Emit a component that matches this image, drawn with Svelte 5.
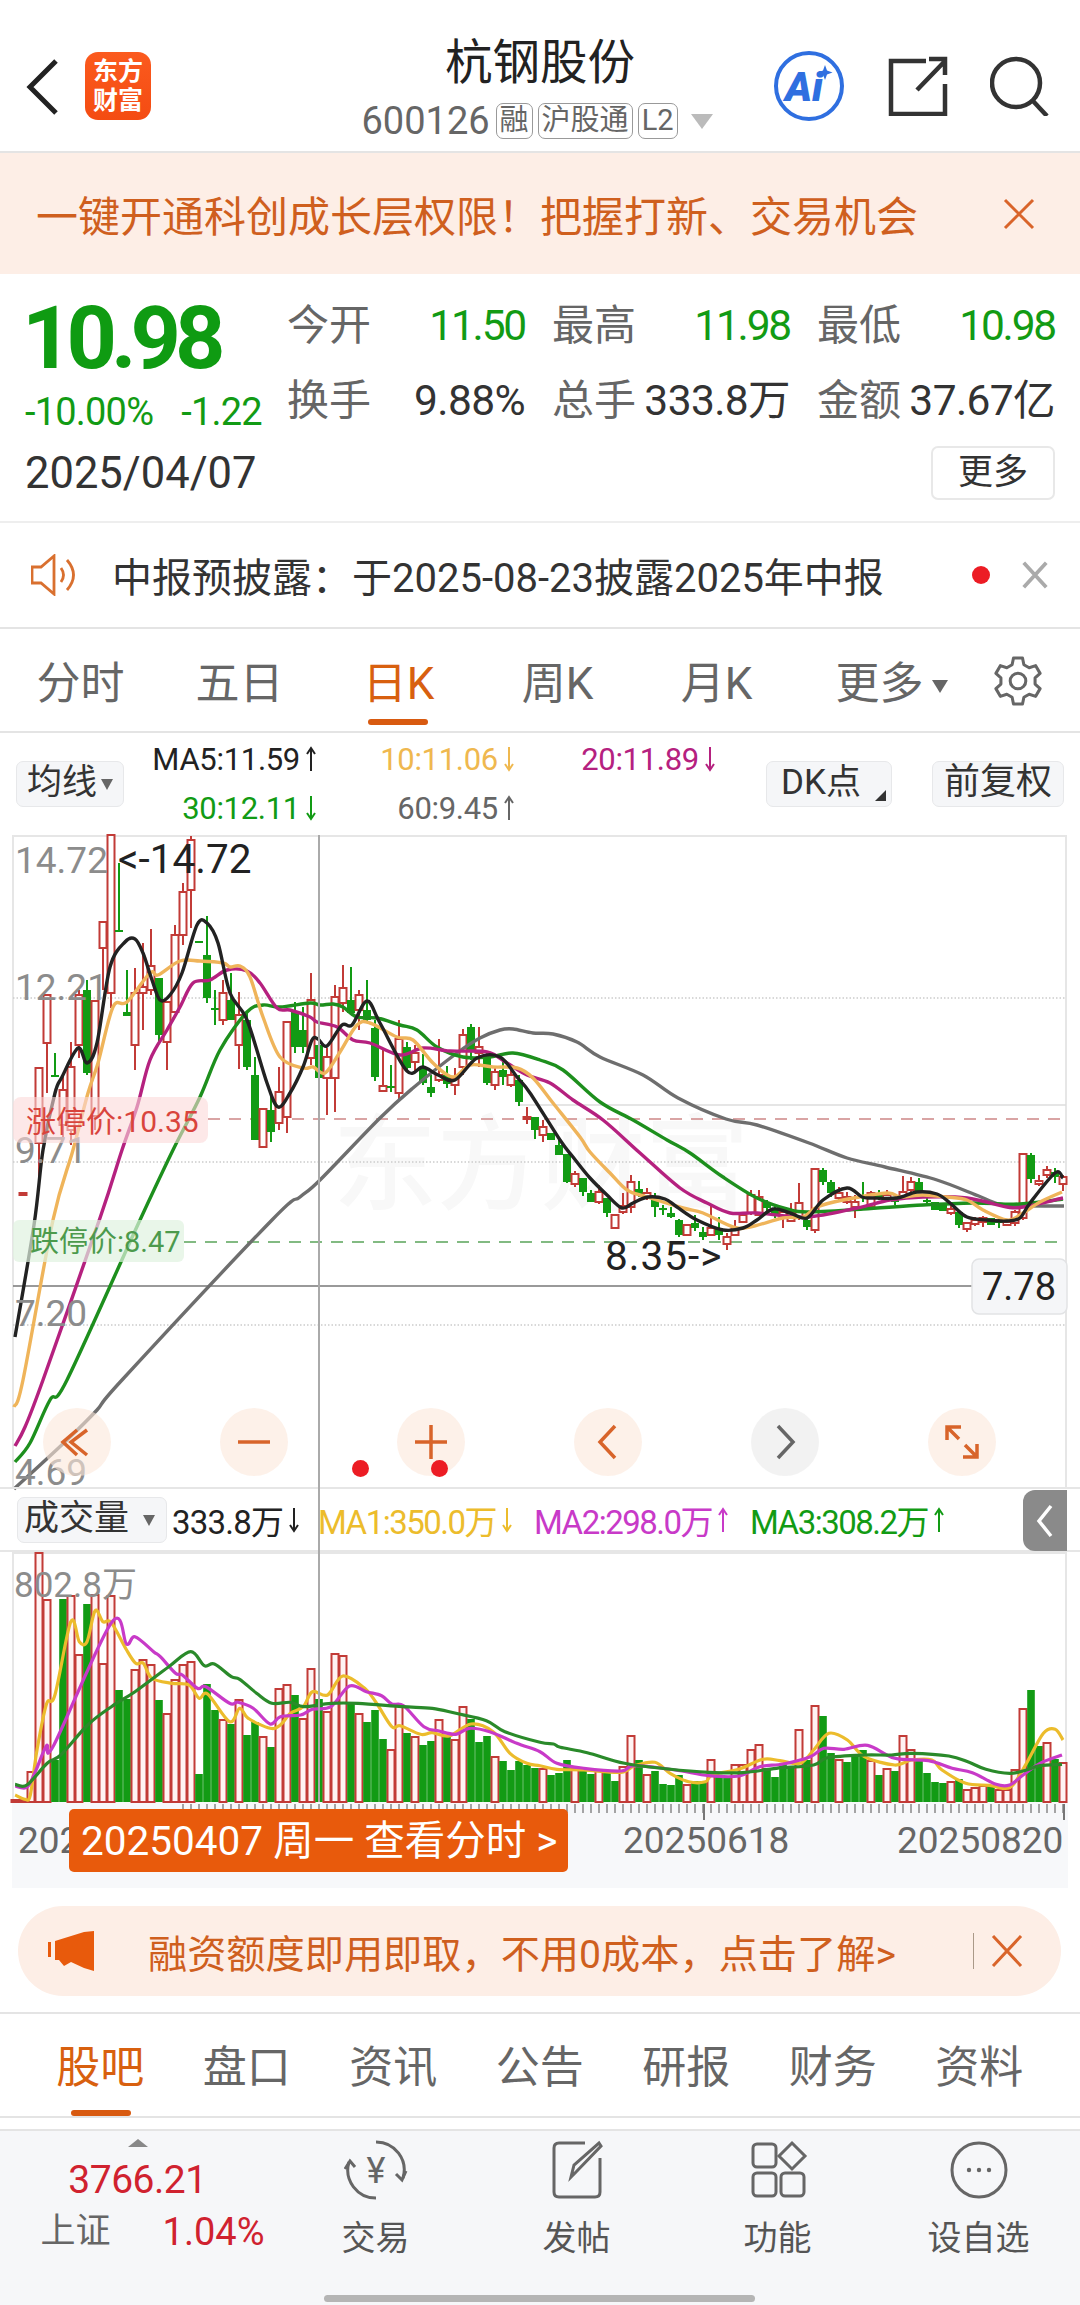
<script>
	// candles in page pixels: [index, r|g, high, bodyTop, bodyBottom, low]
	const candles = [
		[1,'r',1193,1193,1195,1195],[3,'r',1068,1068,1143,1190],[4,'r',995,995,1043,1093],[5,'g',1053,1075,1077,1077],
		[6,'r',1075,1090,1125,1140],[7,'r',1042,1067,1130,1145],[8,'r',990,995,1045,1058],[9,'g',980,990,1073,1075],
		[10,'r',1001,1001,1116,1130],[11,'r',922,922,948,990],[12,'r',835,835,993,1008],[13,'g',863,930,932,932],
		[14,'g',970,1012,1016,1016],[15,'r',968,993,1045,1070],[16,'r',943,987,993,1030],[17,'r',929,966,990,995],
		[18,'g',978,978,1035,1043],[19,'r',1002,1002,1042,1070],[20,'r',925,935,1012,1013],[21,'r',883,892,935,945],
		[22,'r',836,840,890,928],[23,'g',941,941,943,943],[24,'g',916,955,998,1003],[25,'g',990,1008,1010,1025],
		[26,'r',980,993,1020,1025],[27,'g',973,1000,1020,1020],[28,'r',992,1015,1045,1069],[29,'g',1012,1020,1067,1070],
		[30,'g',1057,1075,1140,1140],[31,'r',1109,1109,1147,1147],[32,'g',1093,1110,1132,1142],[33,'r',1067,1092,1123,1130],
		[34,'r',1022,1022,1117,1133],[35,'g',1002,1012,1047,1053],[36,'g',1007,1030,1047,1053],[37,'r',973,1000,1058,1065],
		[38,'g',1013,1045,1078,1085],[39,'r',1048,1057,1078,1115],[40,'r',985,997,1078,1112],[41,'r',965,988,1003,1012],
		[42,'g',967,1000,1013,1015],[43,'r',990,995,1010,1030],[44,'g',980,1010,1020,1022],[45,'g',1020,1028,1077,1081],
		[46,'r',1048,1086,1091,1091],[47,'g',1065,1086,1088,1092],[48,'r',1020,1039,1093,1099],[49,'g',1042,1047,1068,1071],
		[50,'r',1045,1053,1062,1073],[51,'g',1054,1067,1083,1085],[52,'g',1075,1087,1093,1097],[53,'r',1039,1075,1080,1082],
		[54,'g',1066,1075,1084,1088],[55,'r',1068,1079,1085,1095],[56,'r',1029,1035,1067,1075],[57,'g',1024,1027,1050,1060],
		[58,'r',1027,1047,1053,1067],[59,'g',1052,1056,1083,1085],[60,'r',1067,1072,1085,1090],[61,'g',1060,1070,1077,1085],
		[62,'r',1068,1075,1085,1087],[63,'g',1075,1080,1102,1106],[64,'r',1107,1117,1119,1124],[65,'g',1117,1117,1130,1139],
		[66,'r',1120,1127,1135,1142],[67,'g',1133,1133,1140,1140],[68,'g',1137,1145,1155,1155],[69,'g',1154,1154,1182,1183],
		[70,'r',1171,1174,1184,1187],[71,'g',1178,1178,1192,1196],[72,'g',1190,1193,1202,1202],[73,'r',1185,1192,1202,1204],
		[74,'g',1198,1198,1213,1217],[75,'r',1215,1215,1228,1228],[76,'r',1193,1206,1212,1214],[77,'r',1175,1182,1207,1213],
		[78,'g',1181,1189,1195,1197],[79,'r',1188,1193,1197,1200],[80,'g',1193,1198,1207,1217],[81,'g',1205,1208,1210,1215],
		[82,'g',1207,1213,1217,1218],[83,'g',1219,1220,1235,1237],[84,'r',1225,1225,1235,1235],[85,'g',1215,1223,1228,1231],
		[86,'g',1227,1232,1237,1240],[87,'r',1205,1228,1235,1235],[88,'g',1217,1228,1235,1240],[89,'r',1233,1237,1244,1250],
		[90,'r',1220,1229,1235,1236],[91,'r',1213,1215,1222,1223],[92,'r',1190,1195,1213,1215],[93,'r',1190,1197,1215,1215],
		[94,'g',1200,1202,1208,1212],[95,'g',1207,1210,1215,1218],[96,'r',1210,1212,1218,1228],[97,'r',1203,1213,1221,1222],
		[98,'r',1183,1203,1218,1220],[99,'g',1215,1220,1227,1230],[100,'r',1169,1169,1230,1233],[101,'g',1168,1170,1182,1185],
		[102,'g',1180,1182,1193,1197],[103,'r',1187,1193,1198,1200],[104,'r',1192,1197,1202,1204],[105,'r',1195,1202,1207,1218],
		[106,'g',1182,1195,1197,1202],[107,'r',1191,1193,1207,1207],[108,'g',1190,1193,1197,1200],[109,'r',1190,1195,1198,1200],
		[110,'g',1198,1200,1201,1205],[111,'r',1176,1192,1198,1200],[112,'r',1177,1182,1190,1192],[113,'g',1178,1182,1192,1192],
		[114,'g',1198,1200,1202,1203],[115,'g',1202,1202,1210,1210],[116,'g',1203,1205,1211,1211],[117,'r',1205,1209,1213,1215],
		[118,'g',1212,1212,1225,1228],[119,'r',1223,1223,1229,1232],[120,'r',1217,1220,1224,1226],[121,'r',1216,1218,1222,1227],
		[122,'g',1218,1218,1225,1225],[123,'g',1218,1221,1223,1228],[124,'r',1220,1222,1225,1226],[125,'r',1210,1212,1223,1226],
		[126,'r',1154,1154,1218,1220],[127,'g',1153,1155,1179,1183],[128,'r',1175,1181,1184,1186],[129,'r',1166,1170,1175,1178],
		[130,'g',1168,1172,1177,1183],[131,'r',1175,1177,1184,1191]
	];

	const ma5 = [[15,1337],[34,1225],[43,1150],[55,1093],[62,1077],[78,1048],[87,1063],[97,1043],[110,967],[125,942],[135,939],[143,953],[152,980],[160,1000],[170,995],[182,973],[197,925],[207,923],[218,943],[230,993],[247,1020],[267,1083],[278,1107],[290,1093],[303,1067],[312,1040],[318,1039],[327,1046],[342,1025],[352,1025],[367,1001],[380,1023],[407,1071],[423,1067],[438,1075],[455,1080],[477,1058],[500,1057],[517,1077],[530,1093],[560,1140],[573,1157],[590,1178],[607,1195],[622,1208],[633,1203],[648,1197],[665,1199],[677,1207],[697,1220],[723,1230],[743,1228],[757,1220],[773,1209],[790,1213],[807,1218],[823,1200],[847,1188],[862,1197],[873,1198],[897,1198],[917,1192],[937,1194],[950,1203],[967,1217],[987,1220],[1007,1221],[1020,1218],[1030,1203],[1055,1173],[1063,1178]];
	const ma10 = [[14,1407],[23,1380],[53,1220],[73,1150],[88,1093],[98,1063],[113,1007],[127,1002],[150,973],[158,975],[180,961],[200,961],[223,963],[230,967],[240,966],[250,977],[263,1017],[280,1057],[303,1068],[313,1067],[325,1073],[340,1052],[357,1025],[370,1023],[397,1037],[413,1040],[433,1063],[453,1077],[470,1065],[493,1067],[517,1068],[533,1078],[553,1103],[580,1137],[590,1152],[610,1173],[627,1190],[647,1197],[683,1208],[703,1213],[733,1227],[750,1227],[783,1218],[803,1217],[817,1207],[843,1200],[887,1193],[900,1197],[923,1195],[947,1197],[967,1200],[983,1210],[1007,1220],[1020,1215],[1040,1202],[1062,1192]];
	const ma20 = [[15,1446],[25,1427],[43,1380],[100,1218],[122,1150],[137,1107],[150,1060],[167,1030],[180,1007],[193,983],[210,980],[227,970],[247,971],[260,983],[277,1008],[290,1010],[310,1017],[317,1022],[337,1027],[353,1040],[370,1043],[400,1055],[423,1048],[450,1051],[487,1052],[507,1063],[527,1075],[550,1083],[573,1100],[603,1120],[640,1153],[680,1188],[707,1203],[730,1213],[757,1213],[807,1217],[857,1208],[890,1200],[923,1197],[967,1198],[1007,1207],[1023,1207],[1063,1198]];
	const ma30 = [[15,1462],[30,1443],[50,1400],[67,1380],[140,1220],[173,1150],[200,1097],[220,1050],[247,1012],[263,1005],[280,1007],[310,1003],[320,1005],[333,1004],[343,1007],[357,1017],[377,1018],[400,1025],[417,1030],[437,1047],[463,1057],[490,1057],[513,1053],[540,1060],[563,1070],[600,1102],[633,1120],[667,1140],[690,1153],[723,1177],[757,1198],[787,1209],[807,1212],[863,1209],[923,1205],[973,1203],[1020,1204],[1063,1199]];
	const ma60 = [[14,1489],[67,1440],[97,1410],[122,1380],[272,1220],[300,1197],[320,1180],[380,1118],[413,1088],[457,1053],[480,1038],[500,1030],[513,1029],[533,1033],[553,1034],[577,1042],[600,1057],[643,1075],[678,1098],[726,1119],[757,1125],[809,1143],[847,1158],[885,1167],[937,1180],[981,1197],[1005,1205],[1064,1206]];

	// volume bars: heights in px above the 1802 baseline
	const volume = [
		[2,'r'],[2,'r'],[30,'r'],[249,'r'],[202,'r'],[42,'g'],[203,'g'],[206,'r'],[147,'r'],[198,'g'],[207,'r'],[138,'r'],[206,'r'],[112,'g'],[103,'g'],[132,'r'],[142,'r'],[137,'r'],[102,'g'],[88,'r'],
		[122,'r'],[137,'r'],[140,'r'],[28,'g'],[118,'g'],[92,'g'],[82,'r'],[78,'g'],[102,'r'],[67,'g'],[80,'g'],[65,'r'],[55,'g'],[113,'r'],[117,'r'],[107,'g'],[83,'r'],[133,'r'],[103,'g'],[90,'r'],
		[148,'r'],[146,'r'],[99,'g'],[88,'r'],[80,'g'],[92,'g'],[63,'g'],[52,'r'],[97,'r'],[69,'g'],[65,'r'],[57,'g'],[61,'g'],[82,'r'],[65,'g'],[62,'r'],[95,'r'],[83,'g'],[60,'g'],[66,'g'],
		[45,'r'],[41,'g'],[32,'g'],[41,'g'],[37,'g'],[34,'g'],[33,'r'],[27,'g'],[29,'g'],[42,'g'],[33,'r'],[31,'g'],[28,'g'],[31,'r'],[30,'g'],[21,'g'],[35,'r'],[66,'r'],[42,'g'],[27,'r'],
		[31,'g'],[18,'g'],[17,'g'],[27,'g'],[17,'r'],[21,'g'],[21,'g'],[42,'r'],[27,'g'],[25,'g'],[37,'r'],[37,'r'],[52,'r'],[57,'r'],[34,'g'],[25,'g'],[39,'g'],[34,'g'],[72,'r'],[42,'g'],
		[96,'r'],[86,'g'],[49,'g'],[42,'r'],[40,'g'],[47,'g'],[52,'g'],[41,'r'],[27,'g'],[33,'r'],[31,'g'],[66,'r'],[52,'r'],[42,'g'],[29,'g'],[20,'g'],[19,'g'],[20,'r'],[23,'g'],[12,'r'],
		[14,'r'],[16,'r'],[16,'g'],[12,'r'],[12,'r'],[32,'r'],[93,'r'],[112,'g'],[56,'g'],[59,'r'],[43,'g'],[39,'r']
	];

	// the volume averages were read off two crops, hence the two scales
	const left = (p) => p.map(([x, y]) => [10 + x / 2.96, 1550 + y / 3]);
	const right = (p) => p.map(([x, y]) => [540 + x / 2.96, 1600 + y / 3]);
	const ma1 = [...left([[15,735],[45,748],[60,735],[80,600],[108,462],[133,435],[180,215],[205,275],[228,275],[252,182],[275,215],[300,218],[345,300],[372,340],[395,340],[420,385],[480,400],[530,405],[560,445],[585,432],[650,515],[680,475],[705,505],[770,535],[800,525],[830,490],[868,470],[895,425],[940,435],[985,378],[1050,415],[1085,460],[1130,530],[1155,527],[1215,553],[1250,548],[1300,558],[1365,522],[1430,545],[1480,610],[1530,640]]), ...right([[0,497],[50,508],[130,510],[240,517],[280,497],[340,487],[385,520],[440,545],[490,545],[510,525],[590,507],[660,478],[710,482],[770,490],[810,450],[855,400],[910,420],[960,470],[1050,495],[1100,480],[1160,480],[1190,510],[1260,550],[1330,556],[1370,565],[1400,555],[1440,490],[1490,400],[1525,388],[1548,420]])];
	const ma2 = [...left([[15,708],[50,712],[75,665],[108,587],[130,585],[300,218],[345,282],[370,260],[425,305],[445,320],[490,370],[510,375],[555,415],[580,410],[650,460],[675,457],[720,475],[770,522],[800,500],[860,495],[895,478],[950,470],[1005,408],[1055,425],[1100,437],[1130,462],[1165,467],[1225,530],[1270,543],[1320,553],[1360,535],[1420,545],[1500,580]]), ...right([[0,455],[50,490],[130,505],[240,513],[280,497],[400,510],[500,527],[590,528],[650,500],[720,492],[800,470],[840,445],[900,448],[970,436],[1050,475],[1150,482],[1220,505],[1280,518],[1350,553],[1390,555],[1430,525],[1480,490],[1545,465]])];
	const ma3 = [...left([[15,703],[50,705],[110,640],[150,615],[230,525],[300,470],[370,425],[470,350],[535,305],[575,347],[605,342],[655,380],[680,388],[730,430],[775,460],[830,457],[870,470],[950,460],[1030,460],[1160,470],[1250,475],[1320,490],[1410,512],[1465,545]]), ...right([[0,427],[40,432],[60,442],[140,458],[250,490],[380,507],[500,517],[600,518],[700,505],[810,495],[850,473],[960,465],[1040,465],[1100,460],[1210,468],[1270,487],[1320,508],[1390,520],[1440,510],[1480,497],[1545,493]])];

	function smooth(p) {
		let d = `M${p[0][0].toFixed(1)} ${p[0][1].toFixed(1)}`;
		for (let i = 0; i < p.length - 1; i++) {
			const a = p[i - 1] ?? p[i], b = p[i], c = p[i + 1], e = p[i + 2] ?? c;
			const c1 = [b[0] + (c[0] - a[0]) / 6, b[1] + (c[1] - a[1]) / 6];
			const c2 = [c[0] - (e[0] - b[0]) / 6, c[1] - (e[1] - b[1]) / 6];
			d += `C${c1[0].toFixed(1)} ${c1[1].toFixed(1)} ${c2[0].toFixed(1)} ${c2[1].toFixed(1)} ${c[0].toFixed(1)} ${c[1].toFixed(1)}`;
		}
		return d;
	}

	function gear(cx, cy, R, r, n) {
		const pt = (rad, deg) => {
			const a = (deg * Math.PI) / 180;
			return `${(cx + rad * Math.cos(a)).toFixed(1)} ${(cy + rad * Math.sin(a)).toFixed(1)}`;
		};
		const pts = [];
		for (let k = 0; k < n; k++) {
			const a = (k * 360) / n - 90;
			pts.push(pt(R, a - 11), pt(R, a + 11), pt(r, a + 20), pt(r, a + 40));
		}
		return 'M' + pts.join('L') + 'Z';
	}

	const barX = (i) => 15 + 8 * i;
	const ticks = Array.from({ length: 112 }, (_, k) => barX(21) + k * 8).filter((x) => x < 1066);

	const stats = [
		['今开', '11.50', 'down'], ['最高', '11.98', 'down'], ['最低', '10.98', 'down'],
		['换手', '9.88%', ''], ['总手', '333.8万', ''], ['金额', '37.67亿', '']
	];
	const periods = ['分时', '五日', '日K', '周K', '月K'];
	const maLegend = [
		{ text: 'MA5:11.59', color: '#222', up: true },
		{ text: '10:11.06', color: '#efb84f', up: false },
		{ text: '20:11.89', color: '#b5217f', up: false },
		{ text: '30:12.11', color: '#129b14', up: false },
		{ text: '60:9.45', color: '#666', up: true }
	];
	const volLegend = [
		{ text: 'MA1:350.0万', color: '#ecbc2c', up: false },
		{ text: 'MA2:298.0万', color: '#c83ac8', up: true },
		{ text: 'MA3:308.2万', color: '#129b14', up: true }
	];
	const infoTabs = ['股吧', '盘口', '资讯', '公告', '研报', '财务', '资料'];
</script>

{#snippet arrow(up)}
	<svg class="arrow" viewBox="0 0 12 28" aria-hidden="true">
		{#if up}
			<path d="M6 26V3M2 9l4-6 4 6" />
		{:else}
			<path d="M6 2v23M2 19l4 6 4-6" />
		{/if}
	</svg>
{/snippet}

<div class="page">
	<header class="top">
		<div class="top-left">
			<svg class="back" viewBox="0 0 36 58"><path d="M31 3 5 29l26 26" /></svg>
			<div class="logo"><span>东方</span><span>财富</span></div>
		</div>
		<div class="title">
			<h1>杭钢股份</h1>
			<div class="code">
				<span class="code-num">600126</span>
				<span class="chip">融</span>
				<span class="chip">沪股通</span>
				<span class="chip">L2</span>
				<i class="caret"></i>
			</div>
		</div>
		<div class="top-right">
			<svg class="ai" viewBox="0 0 72 72">
				<circle cx="36" cy="36" r="33" />
				<text x="12" y="51">Ai</text>
				<path class="spark" d="M52 15l2 5.500 5.500 2-5.500 2-2 5.500-2-5.500-5.500-2 5.500-2z" />
			</svg>
			<svg class="share" viewBox="0 0 60 60">
				<path d="M38 5H3v53h54V28" />
				<path d="M29 34 57 5M41 3h16v16" />
			</svg>
			<svg class="search" viewBox="0 0 60 60">
				<circle cx="26" cy="27" r="24" />
				<path d="M43 45l14 15" />
			</svg>
		</div>
	</header>

	<div class="banner">
		<span>一键开通科创成长层权限！把握打新、交易机会</span>
		<svg class="close" viewBox="0 0 32 32"><path d="M2 2l28 28M30 2 2 30" /></svg>
	</div>

	<section class="quote">
		<div class="quote-top">
			<div class="price-box">
				<div class="price">10.98</div>
				<div class="change"><span>-10.00%</span><span>-1.22</span></div>
			</div>
			<div class="stat-grid">
				{#each stats as [label, value, dir]}
					<div class="stat">
						<span class="stat-label">{label}</span>
						<span class="stat-val" class:down={dir === 'down'}>{value}</span>
					</div>
				{/each}
			</div>
		</div>
		<div class="quote-foot">
			<span class="date">2025/04/07</span>
			<span class="more-btn">更多</span>
		</div>
	</section>

	<div class="notice">
		<svg class="speaker" viewBox="0 0 48 42">
			<path d="M1 13h9L23 2v38L10 29H1z" />
			<path d="M30 14q5 7 0 14M36 6q13 15 0 30" />
		</svg>
		<span class="notice-text">中报预披露：于2025-08-23披露2025年中报</span>
		<i class="dot"></i>
		<svg class="close gray" viewBox="0 0 32 32"><path d="M4 3l24 26M28 3 4 29" /></svg>
	</div>

	<nav class="periods">
		{#each periods as p, i}
			<span class="period" class:active={i === 2}>{p}</span>
		{/each}
		<span class="period more">更多<i class="caret small"></i></span>
		<svg class="gear" viewBox="0 0 60 60">
			<path d={gear(30, 30, 27, 20, 6)} />
			<circle cx="30" cy="30" r="9" />
		</svg>
	</nav>

	<div class="legend">
		<span class="tool-btn first">均线<i class="caret tiny"></i></span>
		<div class="ma-grid">
			{#each maLegend as m}
				<span class="ma" style="color:{m.color}">{m.text}{@render arrow(m.up)}</span>
			{/each}
		</div>
		<span class="tool-btn dk">DK点<i class="corner"></i></span>
		<span class="tool-btn adj">前复权</span>
	</div>

	<div class="charts">
		<svg class="price-chart" viewBox="0 835 1080 652" width="1080" height="652">
			<text class="watermark" x="333" y="1202">东方财富</text>

			<path class="frame" d="M13 1487V836H1066V1487" />
			{#each [998, 1162, 1325] as y}
				<line class="grid" x1="13" x2="1066" y1={y} y2={y} />
			{/each}
			<line class="prev" x1="520" x2="1066" y1="1105" y2="1105" />
			<line class="limit-up" x1="208" x2="1066" y1="1119" y2="1119" />
			<line class="limit-down" x1="184" x2="1066" y1="1242" y2="1242" />
			<line class="last" x1="13" x2="973" y1="1286" y2="1286" />

			{#each candles as [i, kind, h, t, b, l]}
				{#if kind === 'r'}
					<line class="wick-r" x1={barX(i)} x2={barX(i)} y1={h} y2={t} />
					<line class="wick-r" x1={barX(i)} x2={barX(i)} y1={b} y2={l} />
					<rect class="body-r" x={barX(i) - 3.5} y={t} width="7" height={b - t} />
				{:else}
					<line class="wick-g" x1={barX(i)} x2={barX(i)} y1={h} y2={l} />
					<rect class="body-g" x={barX(i) - 4} y={t} width="8" height={Math.max(b - t, 2)} />
				{/if}
			{/each}

			<path class="ma-line" stroke="#6e6e6e" d={smooth(ma60)} />
			<path class="ma-line" stroke="#1d8f1d" d={smooth(ma30)} />
			<path class="ma-line" stroke="#b5217f" d={smooth(ma20)} />
			<path class="ma-line" stroke="#efb45a" d={smooth(ma10)} />
			<path class="ma-line" stroke="#222" d={smooth(ma5)} />

			<text class="axis" x="15" y="873">14.72</text>
			<text class="axis" x="15" y="1000">12.21</text>
			<text class="axis" x="15" y="1163">9.71</text>
			<text class="axis" x="15" y="1326">7.20</text>
			<text class="axis" x="15" y="1485">4.69</text>
			<text class="extreme" x="118" y="873">&lt;-14.72</text>
			<text class="extreme wide" x="605" y="1270">8.35-&gt;</text>

			<rect class="tag-up" x="13" y="1097" width="195" height="46" rx="8" />
			<text class="tag-up-text" x="26" y="1132">涨停价:10.35</text>
			<rect class="tag-down" x="13" y="1220" width="171" height="42" rx="6" />
			<text class="tag-down-text" x="30" y="1252">跌停价:8.47</text>

			<rect class="last-box" x="972" y="1259" width="95" height="55" rx="7" />
			<text class="last-text" x="1019" y="1300">7.78</text>
		</svg>

		<div class="ctrl-row">
			<button class="ctrl" aria-label="快退">
				<svg viewBox="0 0 36 36"><path d="M18 6 4 18l14 13M28 6 12 18l16 13" /></svg>
			</button>
			<button class="ctrl" aria-label="缩小">
				<svg viewBox="0 0 36 36"><path d="M2 18h32" /></svg>
			</button>
			<button class="ctrl" aria-label="放大">
				<svg viewBox="0 0 36 36"><path d="M2 18h32M18 1v34" /></svg>
			</button>
			<button class="ctrl" aria-label="左移">
				<svg viewBox="0 0 36 36"><path d="M25 2 10 18l15 16" /></svg>
			</button>
			<button class="ctrl idle" aria-label="右移">
				<svg viewBox="0 0 36 36"><path d="M11 2l15 16-15 16" /></svg>
			</button>
			<button class="ctrl" aria-label="全屏">
				<svg viewBox="0 0 36 36"><path d="M3 16V3h14M3 3l12 12M33 20v13H19M33 33 21 21" /></svg>
			</button>
		</div>
		<i class="red-dot one"></i>
		<i class="red-dot two"></i>

		<div class="vol-head">
			<span class="tool-btn vol">成交量<i class="caret tiny"></i></span>
			<span class="vol-item vol-now">333.8万{@render arrow(false)}</span>
			{#each volLegend as m}
				<span class="vol-item" style="color:{m.color}">{m.text}{@render arrow(m.up)}</span>
			{/each}
			<div class="collapse">
				<svg viewBox="0 0 20 36"><path d="M16 3 4 18l12 15" /></svg>
			</div>
		</div>

		<svg class="vol-chart" viewBox="0 1552 1080 336" width="1080" height="336">
			<rect class="axis-bg" x="12" y="1802" width="1056" height="86" />
			<path class="frame" d="M13 1802V1553H1066V1802" />
			{#each volume as [h, kind], i}
				{#if kind === 'r'}
					<rect class="vol-r" x={barX(i) - 3.5} y={1802 - h} width="7" height={h} />
				{:else}
					<rect class="vol-g" x={barX(i) - 3.8} y={1802 - h} width="7.6" height={h} />
				{/if}
			{/each}
			<path class="vol-line" stroke="#ecbc2c" d={smooth(ma1)} />
			<path class="vol-line" stroke="#c83ac8" d={smooth(ma2)} />
			<path class="vol-line" stroke="#2a8a2a" d={smooth(ma3)} />
			<text class="axis vol-top" x="14" y="1597">802.8万</text>

			{#each ticks as x}
				<line class="tick" x1={x} x2={x} y1="1804" y2="1813" />
			{/each}
			<line class="tick major" x1="704" x2="704" y1="1804" y2="1820" />
			<line class="tick major" x1="1064" x2="1064" y1="1804" y2="1820" />
			<text class="date-axis" x="18" y="1853">202</text>
			<text class="date-axis" x="623" y="1853">20250618</text>
			<text class="date-axis" x="897" y="1853">20250820</text>
			<rect class="date-tag" x="69" y="1809" width="499" height="63" rx="5" />
			<text class="date-tag-text" x="81" y="1855">20250407 周一 查看分时 &gt;</text>
		</svg>

		<i class="crosshair"></i>
	</div>

	<section class="promo-wrap">
		<div class="promo">
			<svg class="horn" viewBox="0 0 46 40">
				<path d="M0 11h3v15H0zM7 10 36 1l10-1v40l-10-3-13-6-7 4-5-6H7z" />
			</svg>
			<span class="promo-text">融资额度即用即取，不用0成本，点击了解&gt;</span>
			<i class="promo-sep"></i>
			<svg class="close" viewBox="0 0 32 32"><path d="M2 1l28 30M30 1 2 31" /></svg>
		</div>
	</section>

	<nav class="info-tabs">
		{#each infoTabs as t, i}
			<span class="info-tab" class:active={i === 0}>{t}</span>
		{/each}
	</nav>

	<footer class="dock">
		<div class="dock-row">
			<div class="index">
				<i class="index-up"></i>
				<span class="index-val">3766.21</span>
				<div class="index-line"><span>上证</span><b>1.04%</b></div>
			</div>
			<div class="dock-item">
				<svg viewBox="0 0 64 60">
					<path d="M32 2a28 28 0 0 1 27 36" />
					<path d="M32 58A28 28 0 0 1 5 22" />
					<path d="M62 31l-4 9-6-6M1 29l5-8 5 6" />
					<text x="32" y="43">¥</text>
				</svg>
				<span>交易</span>
			</div>
			<div class="dock-item">
				<svg viewBox="0 0 64 60">
					<path d="M40 3H14q-5 0-5 5v44q0 5 5 5h36q5 0 5-5V18" />
					<path d="M26 37l3-12L54 3l2 3-25 26z" />
				</svg>
				<span>发帖</span>
			</div>
			<div class="dock-item">
				<svg viewBox="0 0 64 60">
					<rect x="7" y="4" width="23" height="23" rx="4" />
					<path d="M46 3 59 16 46 29 33 16z" />
					<rect x="7" y="33" width="23" height="23" rx="4" />
					<rect x="35" y="33" width="23" height="23" rx="4" />
				</svg>
				<span>功能</span>
			</div>
			<div class="dock-item">
				<svg viewBox="0 0 64 60">
					<circle cx="32" cy="30" r="27" />
					<circle class="solid" cx="22" cy="30" r="2.2" />
					<circle class="solid" cx="32" cy="30" r="2.2" />
					<circle class="solid" cx="42" cy="30" r="2.2" />
				</svg>
				<span>设自选</span>
			</div>
		</div>
		<i class="home-bar"></i>
	</footer>
</div>

<style>
	:global(body) {
		margin: 0;
	}
	.page {
		position: relative;
		width: 1080px;
		height: 2305px;
		overflow: hidden;
		background: #fff;
		color: #333;
		font-family: Roboto, 'Noto Sans CJK SC', sans-serif;
	}
	i {
		display: block;
	}

	/* header */
	.top {
		box-sizing: border-box;
		height: 153px;
		display: grid;
		grid-template-columns: 1fr 340px 1fr;
		border-bottom: 2px solid #e4e4e4;
	}
	.top-left {
		display: flex;
		align-items: flex-start;
		padding: 58px 0 0 25px;
		gap: 24px;
	}
	.back {
		width: 36px;
		height: 58px;
		fill: none;
		stroke: #222;
		stroke-width: 5;
	}
	.logo {
		width: 66px;
		height: 68px;
		margin-top: -6px;
		border-radius: 13px;
		background: linear-gradient(#fb5a1e, #f44c12);
		color: #fff;
		display: flex;
		flex-direction: column;
		align-items: center;
		justify-content: center;
		font-size: 25px;
		font-weight: 700;
		line-height: 29px;
	}
	.title {
		display: flex;
		flex-direction: column;
		align-items: center;
		padding-top: 34px;
	}
	.title h1 {
		margin: 0;
		font-size: 47.5px;
		font-weight: 400;
		line-height: 58px;
		color: #222;
	}
	.code {
		display: flex;
		align-items: center;
		gap: 5px;
		margin: 11px 0 0 -6px;
		height: 36px;
		color: #666;
	}
	.code-num {
		font-size: 38px;
		line-height: 36px;
		margin-right: 1px;
	}
	.chip {
		box-sizing: border-box;
		height: 36px;
		padding: 0 3px;
		border: 1.5px solid #999;
		border-radius: 7px;
		font-size: 29px;
		line-height: 32px;
		color: #666;
		white-space: nowrap;
	}
	.caret {
		flex: none;
		width: 0;
		height: 0;
		margin-left: 8px;
		border-left: 11px solid transparent;
		border-right: 11px solid transparent;
		border-top: 15px solid #bbb;
	}
	.caret.small {
		display: inline-block;
		margin-left: 8px;
		vertical-align: 6px;
		border-left-width: 8px;
		border-right-width: 8px;
		border-top: 13px solid #666;
	}
	.caret.tiny {
		display: inline-block;
		margin-left: 4px;
		vertical-align: 4px;
		border-left-width: 6px;
		border-right-width: 6px;
		border-top: 11px solid #666;
	}
	.top-right {
		display: flex;
		align-items: center;
		justify-content: flex-end;
		padding: 38px 30px 0 0;
		height: 96px;
		gap: 42px;
	}
	.ai {
		width: 72px;
		height: 72px;
		margin-right: 1px;
	}
	.ai circle {
		fill: none;
		stroke: #2f6fe0;
		stroke-width: 4;
	}
	.ai text {
		font-size: 41px;
		font-weight: 900;
		font-style: italic;
		fill: #2f6fe0;
	}
	.spark {
		fill: #2f6fe0;
	}
	.share,
	.search {
		width: 60px;
		height: 60px;
		fill: none;
		stroke: #333;
		stroke-width: 4.5;
	}

	/* banner */
	.banner {
		height: 121px;
		display: flex;
		align-items: center;
		justify-content: space-between;
		padding: 0 45px 0 36px;
		background: #fdeee6;
		color: #cf5f1e;
		font-size: 42px;
	}
	.close {
		width: 32px;
		height: 32px;
		fill: none;
		stroke: #d9642a;
		stroke-width: 3;
	}
	.close.gray {
		width: 30px;
		height: 32px;
		stroke: #aaa;
		stroke-width: 4;
	}

	/* quote */
	.quote {
		box-sizing: border-box;
		height: 249px;
		padding: 20px 25px 0;
		border-bottom: 2px solid #eee;
	}
	.quote-top {
		display: flex;
		height: 152px;
	}
	.price-box {
		width: 264px;
	}
	.price {
		font-size: 88px;
		line-height: 88px;
		font-weight: 700;
		color: #0f9b12;
		letter-spacing: -6px;
		margin-left: -3px;
	}
	.change {
		display: flex;
		gap: 28px;
		margin-top: 10px;
		font-size: 38px;
		line-height: 40px;
		color: #129b14;
		letter-spacing: -0.8px;
		white-space: nowrap;
	}
	.stat-grid {
		display: grid;
		grid-template-columns: repeat(3, 238px);
		column-gap: 27px;
		row-gap: 25px;
		align-content: start;
		padding-top: 7px;
	}
	.stat {
		display: flex;
		justify-content: space-between;
		height: 50px;
		line-height: 50px;
		font-size: 42px;
	}
	.stat-label {
		color: #666;
	}
	.stat-val {
		font-size: 42.5px;
		color: #333;
		letter-spacing: -0.6px;
	}
	.stat-val.down {
		color: #129b14;
		letter-spacing: -2.2px;
	}
	.quote-foot {
		display: flex;
		justify-content: space-between;
		align-items: center;
		height: 54px;
	}
	.date {
		font-size: 43.5px;
		color: #333;
	}
	.more-btn {
		box-sizing: border-box;
		width: 124px;
		height: 54px;
		border: 2px solid #e8e8e8;
		border-radius: 7px;
		font-size: 35px;
		line-height: 50px;
		text-align: center;
		color: #333;
	}

	/* notice */
	.notice {
		box-sizing: border-box;
		height: 106px;
		display: flex;
		align-items: center;
		padding: 0 30px 0 31px;
		border-bottom: 2px solid #e4e4e4;
	}
	.speaker {
		width: 48px;
		height: 42px;
		fill: none;
		stroke: #d9702f;
		stroke-width: 2.8;
	}
	.notice-text {
		margin-left: 33px;
		font-size: 40px;
		color: #333;
	}
	.dot {
		width: 18px;
		height: 18px;
		margin-left: auto;
		margin-right: 30px;
		border-radius: 50%;
		background: #ec1c24;
	}

	/* period tabs */
	.periods {
		position: relative;
		box-sizing: border-box;
		height: 104px;
		display: grid;
		grid-template-columns: repeat(6, 159px);
		align-items: center;
		padding-left: 1px;
		border-bottom: 2px solid #e4e4e4;
		font-size: 44px;
		color: #666;
		text-align: center;
	}
	.period {
		line-height: 110px;
		height: 104px;
		white-space: nowrap;
	}
	.period.more {
		padding-left: 32px;
	}
	.period.active {
		position: relative;
		color: #d8600f;
	}
	.period.active::after {
		content: '';
		position: absolute;
		left: 49px;
		bottom: 8px;
		width: 60px;
		height: 6px;
		border-radius: 3px;
		background: #d85a10;
	}
	.gear {
		position: absolute;
		right: 36px;
		top: 26px;
		width: 52px;
		height: 52px;
		fill: none;
		stroke: #666;
		stroke-width: 3.5;
		stroke-linejoin: round;
	}

	/* ma legend */
	.legend {
		height: 102px;
		display: flex;
		align-items: center;
		padding: 0 16px;
	}
	.tool-btn {
		box-sizing: border-box;
		flex: none;
		height: 46px;
		border: 1.5px solid #e7e8ea;
		border-radius: 7px;
		background: #f5f6f8;
		font-size: 35px;
		line-height: 41px;
		text-align: center;
		color: #333;
		white-space: nowrap;
	}
	.tool-btn.first {
		width: 108px;
	}
	.tool-btn.dk {
		position: relative;
		width: 126px;
		margin-left: 50px;
		text-align: left;
		padding-left: 14px;
	}
	.corner {
		position: absolute;
		right: 5px;
		bottom: 5px;
		width: 0;
		height: 0;
		border-left: 11px solid transparent;
		border-bottom: 11px solid #333;
	}
	.tool-btn.adj {
		width: 132px;
		margin-left: 40px;
		font-size: 36px;
	}
	.ma-grid {
		display: grid;
		grid-template-columns: 193px 198px 201px;
		row-gap: 12px;
		margin-top: -1px;
	}
	.ma {
		display: flex;
		align-items: center;
		justify-content: flex-end;
		height: 37px;
		font-size: 31px;
		letter-spacing: -0.3px;
		white-space: nowrap;
	}
	.arrow {
		flex: none;
		width: 12px;
		height: 28px;
		margin-left: 5px;
		fill: none;
		stroke: currentColor;
		stroke-width: 2;
	}

	/* charts */
	.charts {
		position: relative;
	}
	.price-chart,
	.vol-chart {
		display: block;
		overflow: visible;
	}
	.frame {
		fill: none;
		stroke: #e6e6e6;
		stroke-width: 2;
	}
	.watermark {
		font-size: 104px;
		font-weight: 500;
		fill: #f8f8f8;
	}
	.grid {
		stroke: #ccc;
		stroke-width: 1.5;
		stroke-dasharray: 1.5 2;
	}
	.prev {
		stroke: #ddd;
		stroke-width: 1.5;
	}
	.limit-up {
		stroke: #d9a4a4;
		stroke-width: 2;
		stroke-dasharray: 12 9;
	}
	.limit-down {
		stroke: #5aa45a;
		stroke-width: 1.5;
		stroke-dasharray: 12 9;
	}
	.last {
		stroke: #777;
		stroke-width: 1.5;
	}
	.wick-r {
		stroke: #c23b37;
		stroke-width: 2;
	}
	.body-r {
		fill: #fff;
		stroke: #c23b37;
		stroke-width: 2;
	}
	.wick-g {
		stroke: #129b14;
		stroke-width: 2;
	}
	.body-g {
		fill: #129b14;
	}
	.ma-line {
		fill: none;
		stroke-width: 3.4;
		stroke-linejoin: round;
	}
	.axis {
		font-size: 37px;
		fill: #8c8c8c;
	}
	.extreme {
		font-size: 40.5px;
		fill: #222;
	}
	.extreme.wide {
		letter-spacing: 1px;
	}
	.tag-up {
		fill: #fbd9d9;
		opacity: 0.6;
	}
	.tag-up-text {
		font-size: 30px;
		fill: #d9443c;
	}
	.tag-down {
		fill: #dff2df;
		opacity: 0.7;
	}
	.tag-down-text {
		font-size: 29px;
		fill: #4c9a4c;
	}
	.last-box {
		fill: #f5f6f8;
		stroke: #e2e3e5;
		stroke-width: 1.5;
	}
	.last-text {
		font-size: 38px;
		fill: #222;
		text-anchor: middle;
	}
	.ctrl-row {
		position: absolute;
		left: 43px;
		top: 573px;
		display: flex;
		gap: 109px;
	}
	.ctrl {
		width: 68px;
		height: 68px;
		padding: 16px;
		border: 0;
		border-radius: 50%;
		background: rgba(252, 231, 219, 0.6);
	}
	.ctrl.idle {
		background: rgba(232, 232, 232, 0.55);
	}
	.ctrl svg {
		display: block;
		width: 36px;
		height: 36px;
		fill: none;
		stroke: #d8642a;
		stroke-width: 3.5;
	}
	.ctrl.idle svg {
		stroke: #666;
	}
	.red-dot {
		position: absolute;
		top: 625px;
		width: 17px;
		height: 17px;
		border-radius: 50%;
		background: #ec1c24;
	}
	.red-dot.one {
		left: 352px;
	}
	.red-dot.two {
		left: 431px;
	}
	.vol-head {
		position: relative;
		box-sizing: border-box;
		height: 65px;
		display: flex;
		align-items: center;
		padding-left: 17px;
		border-top: 2px solid #e6e6e6;
		border-bottom: 2px solid #e6e6e6;
	}
	.tool-btn.vol {
		width: 150px;
		font-size: 35px;
		text-align: left;
		padding-left: 6px;
		margin-right: 5px;
	}
	.tool-btn.vol .caret {
		margin-left: 14px;
	}
	.vol-item {
		display: flex;
		align-items: center;
		flex: none;
		width: 198px;
		font-size: 33px;
		letter-spacing: -1.5px;
		margin-right: 18px;
		white-space: nowrap;
	}
	.vol-now {
		width: 131px;
		color: #222;
		margin-right: 15px;
		letter-spacing: -0.8px;
	}
	.collapse {
		position: absolute;
		right: 13px;
		top: 1px;
		width: 44px;
		height: 61px;
		display: flex;
		align-items: center;
		justify-content: center;
		border-radius: 12px 0 0 12px;
		background: #8a8a8a;
	}
	.collapse svg {
		width: 20px;
		height: 36px;
		fill: none;
		stroke: #fff;
		stroke-width: 3.5;
	}
	.axis-bg {
		fill: #f7f8fa;
	}
	.vol-r {
		fill: #fff3f3;
		stroke: #c23b37;
		stroke-width: 2;
	}
	.vol-g {
		fill: #129b14;
	}
	.vol-line {
		fill: none;
		stroke-width: 3.2;
		stroke-linejoin: round;
	}
	.vol-top {
		font-size: 35px;
	}
	.tick {
		stroke: #888;
		stroke-width: 1.5;
	}
	.tick.major {
		stroke: #777;
		stroke-width: 2;
	}
	.date-axis {
		font-size: 37px;
		fill: #666;
	}
	.date-tag {
		fill: #e85a0c;
	}
	.date-tag-text {
		font-size: 40.5px;
		fill: #fff;
	}
	.crosshair {
		position: absolute;
		left: 318px;
		top: 0;
		width: 1.5px;
		height: 967px;
		background: #aaa;
	}

	/* promo pill */
	.promo-wrap {
		box-sizing: border-box;
		height: 126px;
		padding: 18px 19px 0 18px;
		border-bottom: 2px solid #e4e4e4;
	}
	.promo {
		height: 90px;
		display: flex;
		align-items: center;
		padding: 0 38px 0 30px;
		border-radius: 45px;
		background: #fdeee6;
	}
	.horn {
		flex: none;
		width: 46px;
		height: 40px;
		fill: #e85a0c;
	}
	.promo-text {
		margin-left: 54px;
		font-size: 39.2px;
		color: #cf5f1e;
		white-space: nowrap;
	}
	.promo-sep {
		width: 1.5px;
		height: 36px;
		margin-left: auto;
		margin-right: 17px;
		background: #a98;
	}

	/* info tabs */
	.info-tabs {
		box-sizing: border-box;
		height: 104px;
		display: grid;
		grid-template-columns: repeat(7, 146.5px);
		padding-left: 27px;
		border-bottom: 2px solid #e4e4e4;
		font-size: 44px;
		line-height: 108px;
		text-align: center;
		color: #666;
	}
	.info-tab.active {
		position: relative;
		color: #d8600f;
	}
	.info-tab.active::after {
		content: '';
		position: absolute;
		left: 44px;
		bottom: 6px;
		width: 60px;
		height: 6px;
		border-radius: 3px;
		background: #d85a10;
	}

	/* bottom dock */
	.dock {
		box-sizing: border-box;
		height: 176px;
		margin-top: 11px;
		display: flex;
		flex-direction: column;
		border-top: 2px solid #e4e4e4;
		background: #f6f7f9;
	}
	.dock-row {
		display: grid;
		grid-template-columns: 275px repeat(4, 201px);
	}
	.index {
		display: flex;
		flex-direction: column;
		align-items: center;
		padding-top: 8px;
	}
	.index-up {
		width: 0;
		height: 0;
		border-left: 10px solid transparent;
		border-right: 10px solid transparent;
		border-bottom: 8px solid #888;
	}
	.index-val {
		margin-top: 10px;
		font-size: 39px;
		line-height: 46px;
		color: #d0222f;
		letter-spacing: -0.5px;
	}
	.index-line {
		display: flex;
		gap: 52px;
		margin-top: 6px;
		margin-left: 30px;
		font-size: 35px;
		line-height: 46px;
		color: #666;
		white-space: nowrap;
	}
	.index-line b {
		font-size: 38px;
		font-weight: 400;
		color: #d0222f;
	}
	.dock-item {
		display: flex;
		flex-direction: column;
		align-items: center;
		padding-top: 9px;
		font-size: 34px;
		line-height: 44px;
		color: #555;
	}
	.dock-item svg {
		width: 64px;
		height: 60px;
		margin-bottom: 16px;
		fill: none;
		stroke: #666;
		stroke-width: 3;
	}
	.dock-item text {
		font-size: 36px;
		fill: #666;
		stroke: none;
		text-anchor: middle;
	}
	.dock-item .solid {
		fill: #666;
		stroke: none;
	}
	.home-bar {
		width: 431px;
		height: 7px;
		margin: auto 0 3px 324px;
		border-radius: 4px;
		background: #b5b5b5;
	}
</style>
